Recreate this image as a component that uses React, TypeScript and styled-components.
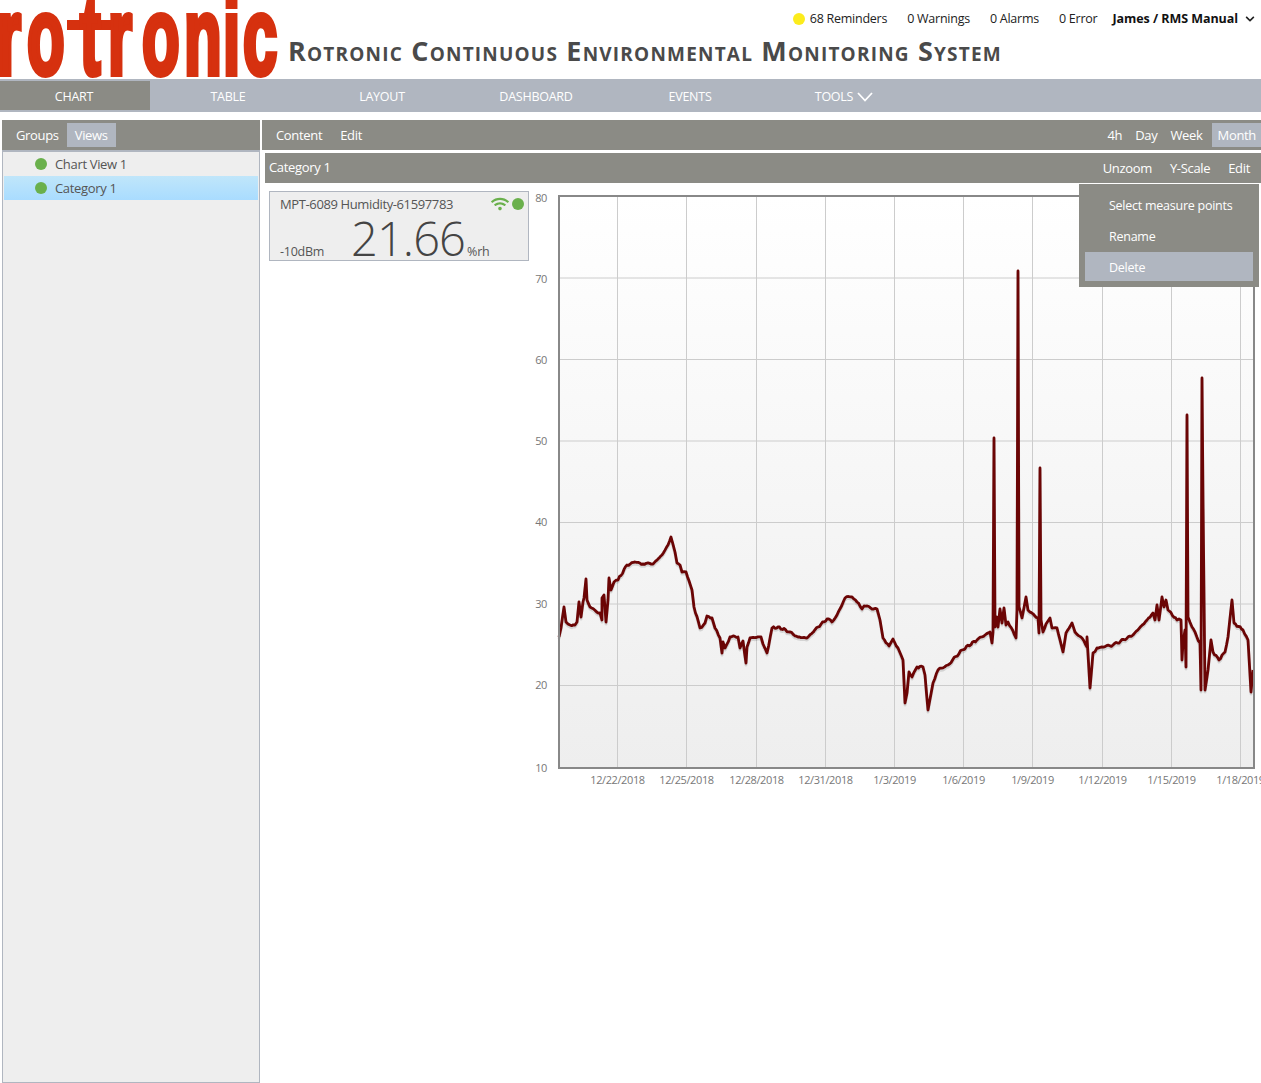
import React, { FC } from "react";
import styled, { createGlobalStyle } from "styled-components";
import { FaWifi, FaChevronDown } from "react-icons/fa";

const GREY = "#8b8b85";
const STEEL = "#b0b6c0";
const GREEN = "#6ab04c";
const LOGO_RED = "#d6310f";

const GlobalStyle = createGlobalStyle`
  html, body {
    margin: 0;
    height: 100%;
    overflow: hidden;
    background: #fff;
  }
  body {
    font-family: "Open Sans", "Noto Sans", sans-serif;
    font-size: 13px;
    letter-spacing: -0.33px;
    color: #444;
  }
`;

const Page = styled.div`
  display: flex;
  flex-direction: column;
  height: 1083px;
  width: 1261px;
  overflow: hidden;
`;

const Header = styled.header`
  display: flex;
  height: 79px;
  flex-shrink: 0;
`;

const Logo = styled.svg`
  width: 280px;
  height: 79px;
  flex-shrink: 0;
`;

const HeaderRight = styled.div`
  flex: 1;
  display: flex;
  flex-direction: column;
  margin-left: 9px;
`;

const StatusRow = styled.div`
  display: flex;
  justify-content: flex-end;
  align-items: center;
  height: 37px;
  padding-right: 6px;
  color: #222;
  font-size: 12.5px;
  letter-spacing: -0.25px;
`;

const StatusDot = styled.span`
  width: 12px;
  height: 12px;
  border-radius: 50%;
  background: #fcec1c;
  margin-right: 5px;
`;

const StatusItem = styled.span`
  margin-right: 20px;
`;

const UserName = styled.span`
  font-weight: 700;
  color: #111;
  margin-left: -5px;
  margin-right: 7px;
  letter-spacing: -0.05px;
`;

const Title = styled.h1`
  margin: -2px 0 0 -1px;
  font-size: 27px;
  line-height: 32px;
  font-weight: 700;
  font-variant: small-caps;
  color: #4a4a4a;
  white-space: nowrap;
  letter-spacing: 1.2px;
`;

const Nav = styled.nav`
  display: flex;
  align-items: center;
  height: 33px;
  flex-shrink: 0;
  background: ${STEEL};
`;

const NavItem = styled.div<{ $active?: boolean }>`
  width: ${({ $active }) => ($active ? "148px" : "154px")};
  padding-right: ${({ $active }) => ($active ? "2px" : "0")};
  margin-right: ${({ $active }) => ($active ? "1px" : "0")};
  padding-top: 2px;
  height: 27px;
  display: flex;
  align-items: center;
  justify-content: center;
  gap: 4px;
  color: #fff;
  font-size: 12.5px;
  letter-spacing: -0.25px;
  background: ${({ $active }) => ($active ? GREY : "transparent")};
`;

const Main = styled.main`
  flex: 1;
  display: flex;
  margin-top: 8px;
  padding-left: 2px;
  min-height: 0;
`;

const Sidebar = styled.aside`
  width: 258px;
  display: flex;
  flex-direction: column;
  flex-shrink: 0;
`;

const Bar = styled.div`
  height: 30px;
  flex-shrink: 0;
  display: flex;
  align-items: center;
  background: ${GREY};
  color: #fff;
`;

const SidebarBar = styled(Bar)`
  padding-left: 6px;
`;

const Tab = styled.div<{ $active?: boolean }>`
  height: 24px;
  display: flex;
  align-items: center;
  padding: 0 8px;
  background: ${({ $active }) => ($active ? STEEL : "transparent")};
`;

const TreeList = styled.div`
  flex: 1;
  background: #eee;
  border: 1px solid ${STEEL};
  border-top: 2px solid ${STEEL};
  padding: 0 1px;
`;

const TreeRow = styled.div<{ $selected?: boolean }>`
  height: 24px;
  display: flex;
  align-items: center;
  padding-left: 31px;
  gap: 8px;
  color: #555;
  background: ${({ $selected }) =>
    $selected ? "linear-gradient(#c0e6fa, #a9dcff)" : "transparent"};
`;

const Dot = styled.span`
  width: 12px;
  height: 12px;
  border-radius: 50%;
  background: ${GREEN};
  flex-shrink: 0;
`;

const Content = styled.section`
  flex: 1;
  min-width: 0;
  display: flex;
  flex-direction: column;
  margin-left: 2px;
`;

const ToolBar = styled(Bar)`
  justify-content: space-between;
`;

const BarGroup = styled.div`
  display: flex;
  align-items: center;
`;

const BarLabel = styled.div`
  height: 24px;
  display: flex;
  align-items: center;
  padding: 0 9px;
`;

const RangeLabel = styled(BarLabel)<{ $active?: boolean }>`
  padding: ${({ $active }) => ($active ? "0 5px 0 6px" : "0 6.5px")};
  margin-left: ${({ $active }) => ($active ? "2.5px" : "0")};
  background: ${({ $active }) => ($active ? STEEL : "transparent")};
`;

const LeftGroup = styled(BarGroup)`
  padding-left: 5px;
`;

const SubBar = styled(Bar)`
  position: relative;
  margin: 3px 0 0 3px;
  justify-content: space-between;
  padding: 0 2px 0 4px;
`;

const SubTitle = styled.span`
  margin-top: -2px;
`;

const Menu = styled.div`
  position: absolute;
  top: 31px;
  right: 2px;
  width: 168px;
  padding: 6px;
  background: ${GREY};
  z-index: 2;
`;

const MenuItem = styled.div<{ $active?: boolean }>`
  height: 29px;
  margin-top: 2px;
  padding-top: 2px;
  box-sizing: border-box;
  display: flex;
  align-items: center;
  padding-left: 24px;
  font-size: 12.5px;
  letter-spacing: -0.25px;
  color: #fff;
  background: ${({ $active }) => ($active ? STEEL : "transparent")};

  &:first-child {
    margin-top: 0;
  }
`;

const Body = styled.div`
  flex: 1;
  display: flex;
  align-items: flex-start;
  padding: 8px 0 0 7px;
  min-height: 0;
  overflow: hidden;
`;

const Card = styled.div`
  width: 260px;
  height: 70px;
  box-sizing: border-box;
  flex-shrink: 0;
  border: 1px solid ${STEEL};
  background: #eee;
  padding: 0 4px 0 10px;
  color: #555;
`;

const CardHead = styled.div`
  display: flex;
  align-items: center;
  justify-content: space-between;
  height: 23px;
  letter-spacing: -0.38px;
`;

const CardIcons = styled.div`
  display: flex;
  align-items: center;
  gap: 3px;
`;

const CardValue = styled.div`
  display: flex;
  align-items: baseline;
  height: 45px;
  padding-top: 1px;
  line-height: 45px;
`;

const Rssi = styled.span`
  width: 71px;
  font-size: 12.5px;
  letter-spacing: -0.25px;
`;

const Reading = styled.span`
  font-size: 47px;
  font-weight: 300;
  color: #444;
  letter-spacing: -0.9px;
`;

const Unit = styled.span`
  font-size: 12.5px;
  letter-spacing: -0.2px;
  margin-left: 2px;
`;

const Chart = styled.svg`
  display: block;
  width: 731px;
  height: 600px;
  margin: -1px 0 0 1px;
  flex-shrink: 0;
  font-family: "Open Sans", "Noto Sans", sans-serif;
  font-size: 11px;
  letter-spacing: -0.4px;
`;

const tracePts: [number, number][] = (
  "559,637 561,628 564,607 566,622 570,625 575,625 577,622 579,602 581,617 583,602 584,598 586,579 587,600 590,607 600,613 602,620 602,598 604,595 606,622 608,600 609,578 611,590 614,582 618,580 627,565 635,562 643,564 653,564 662,555 668,545 671,537 675,552 677,563 680,565 682,572 686,572 692,590 694,607 700,628 705,623 707,616 712,618 715,628 720,638 722,653 723,642 725,648 730,637 738,637 740,648 743,641 746,663 747,647 750,638 761,637 763,644 767,653 772,628 778,627 790,632 798,637 807,638 818,627 827,619 832,622 837,615 845,598 852,597 857,602 862,609 864,606 877,609 880,620 883,638 889,646 893,639 898,648 903,660 905,703 907,693 909,672 912,677 917,667 923,667 925,675 928,710 933,683 938,670 948,665 962,650 977,640 990,632 992,643 993,632 994,438 995,627 997,617 998,627 1000,609 1002,623 1004,608 1006,625 1008,622 1016,638 1017,610 1018,271 1019,607 1022,618 1026,597 1028,610 1038,618 1039,633 1040,468 1041,620 1043,632 1046,624 1050,618 1052,628 1057,628 1063,652 1066,633 1072,623 1075,632 1082,638 1087,647 1087,637 1090,688 1093,653 1097,648 1113,645 1133,635 1147,620 1153,613 1155,620 1157,605 1159,620 1162,597 1164,607 1166,600 1168,610 1177,620 1181,620 1182,660 1183,643 1185,630 1186,667 1187,415 1188,617 1192,627 1200,643 1201,690 1202,378 1203,500 1205,690 1208,670 1211,640 1213,652 1219,660 1225,652 1228,637 1232,600 1234,623 1243,630 1248,640 1251,692 1253,670"
)
  .split(" ")
  .map((p) => p.split(",").map(Number) as [number, number]);

// long runs get a bit of sensor noise so the trace isn't a straight segment
const noisyTrace = (): string => {
  const out: string[] = [];
  tracePts.forEach(([x, y], i) => {
    out.push(`${x},${y}`);
    const next = tracePts[i + 1];
    if (!next || next[0] - x < 3) return;
    const steps = Math.floor((next[0] - x) / 1.5);
    for (let s = 1; s < steps; s++) {
      const t = s / steps;
      const px = x + (next[0] - x) * t;
      const py = y + (next[1] - y) * t;
      const wobble = Math.sin(px * 3.1) * 0.7 + Math.sin(px * 7.3) * 0.5;
      out.push(`${px.toFixed(1)},${(py + wobble).toFixed(1)}`);
    }
  });
  return out.join(" ");
};

const trace = noisyTrace();

const yTicks = [
  { label: "80", y: 196, text: 202 },
  { label: "70", y: 278, text: 283 },
  { label: "60", y: 359.5, text: 364 },
  { label: "50", y: 441, text: 445 },
  { label: "40", y: 522.5, text: 526 },
  { label: "30", y: 604, text: 608 },
  { label: "20", y: 685.5, text: 689 },
  { label: "10", y: 766, text: 772 },
];

const xTicks = [
  { label: "12/22/2018", x: 617.5 },
  { label: "12/25/2018", x: 686.5 },
  { label: "12/28/2018", x: 756.5 },
  { label: "12/31/2018", x: 825.5 },
  { label: "1/3/2019", x: 894.5 },
  { label: "1/6/2019", x: 963.5 },
  { label: "1/9/2019", x: 1032.5 },
  { label: "1/12/2019", x: 1102.5 },
  { label: "1/15/2019", x: 1171.5 },
  { label: "1/18/2019", x: 1240.5 },
];

const HumidityChart: FC = () => (
  <Chart viewBox="530 190 731 600">
    <defs>
      <linearGradient id="plotBg" x1="0" y1="0" x2="0" y2="1">
        <stop offset="0" stopColor="#ffffff" />
        <stop offset="1" stopColor="#eeeeee" />
      </linearGradient>
    </defs>
    <rect x="559" y="196" width="695" height="572" fill="url(#plotBg)" />
    {yTicks.slice(1, -1).map((t) => (
      <line key={t.label} x1="559" x2="1254" y1={t.y} y2={t.y} stroke="#ccc" />
    ))}
    {xTicks.map((t) => (
      <line key={t.label} x1={t.x} x2={t.x} y1="196" y2="768" stroke="#ccc" />
    ))}
    <polyline
      points={trace}
      fill="none"
      stroke="rgba(0,0,0,0.12)"
      strokeWidth="3"
      strokeLinejoin="round"
      transform="translate(0 2)"
    />
    <polyline points={trace} fill="none" stroke="#6b0505" strokeWidth="2.8" strokeLinejoin="round" />
    <rect x="559" y="196" width="695" height="572" fill="none" stroke="#888" strokeWidth="2" />
    {yTicks.map((t) => (
      <text key={t.label} x="547" y={t.text} textAnchor="end" fill="#777">
        {t.label}
      </text>
    ))}
    {xTicks.map((t) => (
      <text key={t.label} x={t.x} y="784" textAnchor="middle" fill="#777">
        {t.label}
      </text>
    ))}
  </Chart>
);

const LOGO_SQUEEZE = 0.56;
const logoX = [-3, 27, 80, 108, 142, 184, 223, 243]
  .map((x) => (x / LOGO_SQUEEZE).toFixed(1))
  .join(" ");

const App: FC = () => (
  <Page>
    <GlobalStyle />
    <Header>
      <Logo viewBox="0 0 280 79">
        <rect x="67" y="20" width="58" height="10" fill={LOGO_RED} />
        <text
          transform={`scale(${LOGO_SQUEEZE} 1)`}
          x={logoX}
          y="74"
          fontFamily="'Liberation Sans', sans-serif"
          fontWeight="700"
          fontSize="110"
          fill={LOGO_RED}
          stroke={LOGO_RED}
          strokeWidth="6"
        >
          rotronic
        </text>
      </Logo>
      <HeaderRight>
        <StatusRow>
          <StatusDot />
          <StatusItem>68 Reminders</StatusItem>
          <StatusItem>0 Warnings</StatusItem>
          <StatusItem>0 Alarms</StatusItem>
          <StatusItem>0 Error</StatusItem>
          <UserName>James / RMS Manual</UserName>
          <FaChevronDown size={10} color="#222" />
        </StatusRow>
        <Title>Rotronic Continuous Environmental Monitoring System</Title>
      </HeaderRight>
    </Header>

    <Nav>
      <NavItem $active>CHART</NavItem>
      <NavItem>TABLE</NavItem>
      <NavItem>LAYOUT</NavItem>
      <NavItem>DASHBOARD</NavItem>
      <NavItem>EVENTS</NavItem>
      <NavItem>
        TOOLS
        <svg width="16" height="10" viewBox="0 0 16 10">
          <polyline points="1,1 8,8.5 15,1" fill="none" stroke="#fff" strokeWidth="1.8" />
        </svg>
      </NavItem>
    </Nav>

    <Main>
      <Sidebar>
        <SidebarBar>
          <Tab>Groups</Tab>
          <Tab $active>Views</Tab>
        </SidebarBar>
        <TreeList>
          <TreeRow>
            <Dot />
            Chart View 1
          </TreeRow>
          <TreeRow $selected>
            <Dot />
            Category 1
          </TreeRow>
        </TreeList>
      </Sidebar>

      <Content>
        <ToolBar>
          <LeftGroup>
            <BarLabel>Content</BarLabel>
            <BarLabel>Edit</BarLabel>
          </LeftGroup>
          <BarGroup>
            <RangeLabel>4h</RangeLabel>
            <RangeLabel>Day</RangeLabel>
            <RangeLabel>Week</RangeLabel>
            <RangeLabel $active>Month</RangeLabel>
          </BarGroup>
        </ToolBar>

        <SubBar>
          <SubTitle>Category 1</SubTitle>
          <BarGroup>
            <BarLabel>Unzoom</BarLabel>
            <BarLabel>Y-Scale</BarLabel>
            <BarLabel>Edit</BarLabel>
          </BarGroup>
          <Menu>
            <MenuItem>Select measure points</MenuItem>
            <MenuItem>Rename</MenuItem>
            <MenuItem $active>Delete</MenuItem>
          </Menu>
        </SubBar>

        <Body>
          <Card>
            <CardHead>
              <span>MPT-6089 Humidity-61597783</span>
              <CardIcons>
                <FaWifi size={18} color={GREEN} />
                <Dot />
              </CardIcons>
            </CardHead>
            <CardValue>
              <Rssi>-10dBm</Rssi>
              <Reading>21.66</Reading>
              <Unit>%rh</Unit>
            </CardValue>
          </Card>
          <HumidityChart />
        </Body>
      </Content>
    </Main>
  </Page>
);

export default App;
